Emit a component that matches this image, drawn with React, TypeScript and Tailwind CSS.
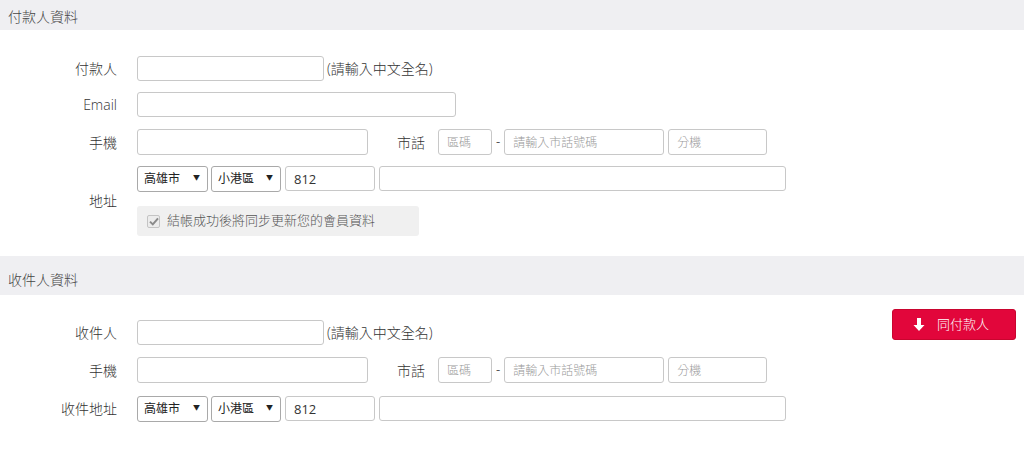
import { useState } from 'react'

const font = { fontFamily: '"Open Sans", "Noto Sans CJK TC", sans-serif' }

const inputCls =
  'h-[25px] border border-[#c8c8c8] rounded-[3px] bg-white px-2 text-[13px] text-[#333] placeholder:text-[#9a9a9a] placeholder:text-[12px] placeholder:font-light outline-none'

function Label({ children }: { children: React.ReactNode }) {
  return <div className="w-[117px] shrink-0 text-right text-[14px] font-light text-[#333]">{children}</div>
}

function Select({ value, width }: { value: string; width: string }) {
  return (
    <div className={`relative ${width}`}>
      <select
        defaultValue={value}
        className="h-[26px] w-full appearance-none border border-[#a9a9a9] rounded-[3px] bg-white pl-[6px] text-[12px] text-[#222] outline-none"
      >
        <option>{value}</option>
      </select>
      <span className="pointer-events-none absolute right-[8px] top-[8px] text-[7px] leading-[9px] text-[#222]">▼</span>
    </div>
  )
}

function Header({ title, className }: { title: string; className: string }) {
  return (
    <div className={`bg-[#efeff2] px-2 text-[14px] font-light text-[#444] ${className}`}>{title}</div>
  )
}

function PhoneRow({ className }: { className?: string }) {
  return (
    <div className={`flex items-center ${className ?? ''}`}>
      <Label>手機</Label>
      <input className={`${inputCls} ml-[20px] h-[26px] w-[231px]`} />
      <span className="ml-[29px] text-[14px] font-light text-[#333]">市話</span>
      <input className={`${inputCls} ml-[13px] h-[26px] w-[54px]`} placeholder="區碼" />
      <span className="mx-[4px] text-[13px] text-[#555]">-</span>
      <input className={`${inputCls} h-[26px] w-[160px]`} placeholder="請輸入市話號碼" />
      <input className={`${inputCls} ml-[4px] h-[26px] w-[99px]`} placeholder="分機" />
    </div>
  )
}

function AddressInputs() {
  return (
    <div className="flex items-center">
      <Select value="高雄市" width="w-[71px]" />
      <div className="ml-[3px]">
        <Select value="小港區" width="w-[70px]" />
      </div>
      <input className={`${inputCls} ml-[4px] w-[90px]`} defaultValue="812" />
      <input className={`${inputCls} ml-[4px] w-[407px]`} />
    </div>
  )
}

function Hint() {
  return <span className="ml-[3px] text-[14px] font-light text-[#333]">(請輸入中文全名)</span>
}

export default function App() {
  const [sync, setSync] = useState(true)

  return (
    <div className="w-[1024px] h-[464px] bg-white overflow-hidden" style={font}>
      <Header title="付款人資料" className="h-[30px] pt-[6px]" />

      <div className="pt-[26px] flex flex-col">
        <div className="flex items-center">
          <Label>付款人</Label>
          <input className={`${inputCls} ml-[20px] w-[187px]`} />
          <Hint />
        </div>
        <div className="mt-[11px] flex items-center">
          <Label>Email</Label>
          <input className={`${inputCls} ml-[20px] w-[319px]`} />
        </div>
        <PhoneRow className="mt-[12px]" />
        <div className="mt-[10px] flex items-center">
          <Label>地址</Label>
          <div className="ml-[20px] flex flex-col gap-[14px]">
            <AddressInputs />
            <label className="flex h-[30px] w-[282px] items-center rounded-[3px] bg-[#f0f0f0] pl-[10px]">
              <input
                type="checkbox"
                checked={sync}
                onChange={(e) => setSync(e.target.checked)}
                className="sr-only"
              />
              <span className="flex h-[13px] w-[13px] items-center justify-center rounded-[2px] border border-[#c4c4c4] bg-[#ececec]">
                {sync && (
                  <svg width="10" height="9" viewBox="0 0 10 9">
                    <path d="M1 4.6 3.8 7.4 9 1.4" fill="none" stroke="#8a8a8a" strokeWidth="2" />
                  </svg>
                )}
              </span>
              <span className="ml-[7px] text-[13px] font-light text-[#555]">結帳成功後將同步更新您的會員資料</span>
            </label>
          </div>
        </div>
      </div>

      <Header title="收件人資料" className="mt-[20px] h-[39px] pt-[13px]" />

      <div className="flex">
        <div className="pt-[25px] flex flex-1 flex-col">
          <div className="flex items-center">
            <Label>收件人</Label>
            <input className={`${inputCls} ml-[20px] w-[187px]`} />
            <Hint />
          </div>
          <PhoneRow className="mt-[12px]" />
          <div className="mt-[12px] flex items-center">
            <Label>收件地址</Label>
            <div className="ml-[20px]">
              <AddressInputs />
            </div>
          </div>
        </div>
        <div className="pt-[14px] pr-[8px]">
          <button
            type="button"
            className="flex h-[31px] w-[124px] items-center rounded-[3px] border border-[#c9052f] bg-[#e2063b] pl-[20px] text-[13px] font-light text-white"
          >
            <svg width="12" height="13" viewBox="0 0 12 13" fill="white">
              <path d="M4 0h4v7h3.5L6 13 0.5 7H4z" />
            </svg>
            <span className="ml-[12px]">同付款人</span>
          </button>
        </div>
      </div>
    </div>
  )
}
